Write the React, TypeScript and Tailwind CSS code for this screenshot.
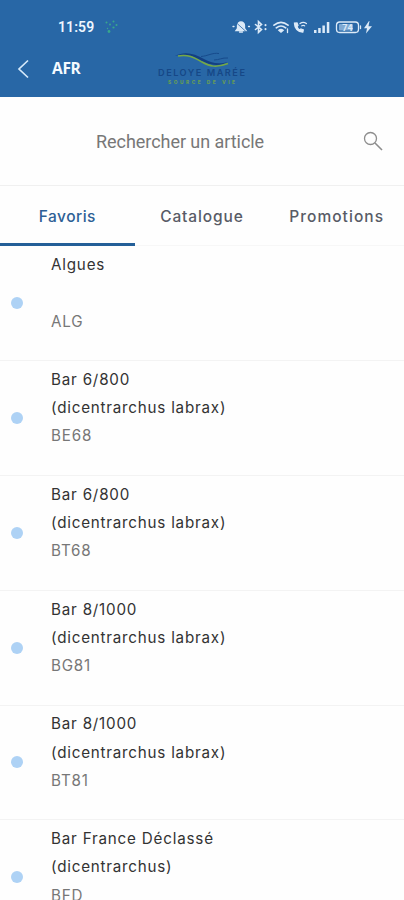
import { type FC } from "react";

interface Article {
  title: string;
  latin?: string;
  code: string;
}

const articles: Article[] = [
  { title: "Algues", code: "ALG" },
  { title: "Bar 6/800", latin: "(dicentrarchus labrax)", code: "BE68" },
  { title: "Bar 6/800", latin: "(dicentrarchus labrax)", code: "BT68" },
  { title: "Bar 8/1000", latin: "(dicentrarchus labrax)", code: "BG81" },
  { title: "Bar 8/1000", latin: "(dicentrarchus labrax)", code: "BT81" },
  { title: "Bar France Déclassé", latin: "(dicentrarchus)", code: "BFD" },
];

const StatusIcons = () => (
  <svg
    className="ml-[112px] h-4 w-[142px] text-[#dceaf8]"
    viewBox="0 0 142 16"
    fill="none"
    stroke="currentColor"
    strokeWidth="1.3"
    strokeLinecap="round"
  >
    {/* muted bell */}
    <path d="M4 11.500h10l-1.500-2V6.500a3.500 3.500 0 0 0-7 0v3z" fill="currentColor" />
    <path d="M7.500 13h3M1 7.500h1M16.500 7.500h1" />
    <path d="M3.500 3l11.500 10.500" stroke="#2867a6" strokeWidth=".8" />
    {/* bluetooth */}
    <path d="M23.500 5.500l6 5-3 2.800V2.700l3 2.800-6 5" strokeWidth="1.600" />
    <path d="M33.500 6v.2M33.500 10v.2" strokeWidth="2" />
    {/* wifi */}
    <path d="M42 6.200q7-5.500 14 0M44.300 8.800q4.700-3.600 9.400 0" strokeWidth="1.700" />
    <path d="M46.800 11.200q2.200-1.600 4.400 0L49 13.200z" fill="currentColor" />
    <path d="M55.500 10v3.500" />
    {/* wifi call */}
    <path d="M62.500 4.200c0 5 3.500 8.800 8.300 9l.5-2.200-2.400-1-1.200 1c-1.300-.8-2.200-2-2.700-3.300l1-1.200-1-2.500z" fill="currentColor" />
    <path d="M68 4.500q3.200-2.400 6.400 0M69.800 6.800q1.400-1 2.800 0" />
    {/* signal */}
    <g fill="currentColor" stroke="none">
      <rect x="82" y="11" width="2.500" height="3" />
      <rect x="86.200" y="9" width="2.500" height="5" />
      <rect x="90.400" y="6.500" width="2.500" height="7.500" />
      <rect x="94.800" y="3" width="2.500" height="11" />
    </g>
    {/* battery */}
    <rect x="104.500" y="3" width="22" height="10.500" rx="3.200" />
    <rect x="107" y="5" width="14" height="6.500" rx="1" fill="#7fa9d3" stroke="none" />
    <path d="M128.500 7v2.500" />
    <text
      x="115.500"
      y="11.500"
      textAnchor="middle"
      fontFamily="Roboto, sans-serif"
      fontSize="9"
      fontWeight="700"
      fill="currentColor"
      stroke="none"
    >
      74
    </text>
    <path d="M137 2l-5 7.200h3l-1 5.300 6-7.300h-3.500l1-5.200z" fill="currentColor" stroke="none" />
  </svg>
);

const StatusBar = () => (
  <div className="flex h-[53px] items-center pl-[58px]">
    <span className="w-[37px] font-['Roboto',sans-serif] text-[14px] leading-none font-semibold tracking-[0.1px] text-[#eef6ff]">
      11:59
    </span>
    <svg className="ml-[9px] h-4 w-4" viewBox="0 0 16 16" fill="#39a78c">
      <circle cx="2.500" cy="3.500" r="1" />
      <circle cx="6" cy="5.500" r="1" />
      <circle cx="9.500" cy="2.500" r="1" />
      <circle cx="12.500" cy="6" r="1" />
      <circle cx="9.500" cy="8.500" r="1.100" />
      <circle cx="5" cy="12.500" r="1.400" />
      <circle cx="3.500" cy="9.500" r=".7" />
    </svg>
    <StatusIcons />
  </div>
);

const Logo = () => (
  <svg className="ml-[74px] h-9 w-[90px]" viewBox="0 0 90 36" fill="none">
    <path d="M18 5C28-.5 38 3 46 7.500s15 6 25 3.500C62 16 52 14 44 9.500S29 2 18 5z" fill="#133f82" />
    <path d="M21 5c10-2 16 1.500 24 6s14 6 26 1.500" stroke="#75a846" strokeWidth="1.500" />
    <path d="M44 5.500c7-.5 11-4 18-3M57 9c5 0 8-2.500 14-2" stroke="#174b8c" />
    <text
      x="1"
      y="24.500"
      textLength="87"
      fontFamily="Inter, sans-serif"
      fontSize="9.200"
      fontWeight="600"
      fill="#164887"
    >
      DELOYE MARÉE
    </text>
    <text
      x="11"
      y="32.500"
      textLength="67"
      fontFamily="Inter, sans-serif"
      fontSize="4.800"
      fontWeight="800"
      fill="#659b58"
    >
      SOURCE DE VIE
    </text>
  </svg>
);

const Header = () => (
  <header className="h-[97px] shrink-0 bg-[#2867a6]">
    <StatusBar />
    <div className="flex h-8 items-center pl-[17px]">
      <svg className="h-5 w-3" viewBox="0 0 12 20" fill="none" stroke="#d5e9fa" strokeWidth="1.700">
        <path d="M11 1.500L2 10l9 8.500" />
      </svg>
      <span className="ml-[23px] w-[31px] font-['Open_Sans',sans-serif] text-[15.500px] leading-none font-bold tracking-[-0.3px] text-[#f5faff]">
        AFR
      </span>
      <Logo />
    </div>
  </header>
);

const SearchBar = () => (
  <div className="flex h-[89px] shrink-0 items-center border-b border-[#f0f0f0] pl-24">
    <span className="w-[267px] font-['Roboto',sans-serif] text-[18px] tracking-[-0.05px] text-[#777]">
      Rechercher un article
    </span>
    <svg className="h-5 w-5" viewBox="0 0 20 20" fill="none" stroke="#8d8d8d" strokeWidth="1.300">
      <circle cx="7.500" cy="7.500" r="6" />
      <path d="M12 12l7 7" strokeWidth="1.600" />
    </svg>
  </div>
);

const Tabs = () => (
  <nav className="grid h-[60px] shrink-0 grid-cols-3 font-['Inter',sans-serif] text-[15.500px] font-medium">
    <div className="border-b-[3px] border-[#245f98] pt-[19px] text-center tracking-[0.5px] text-[#2d6095]">
      Favoris
    </div>
    <div className="border-b border-[#f7f7f7] pt-[19px] text-center tracking-[0.9px] text-[#585b66]">
      Catalogue
    </div>
    <div className="border-b border-[#f7f7f7] pt-[19px] text-center tracking-[1.050px] text-[#585b66]">
      Promotions
    </div>
  </nav>
);

const ArticleRow: FC<Article> = ({ title, latin, code }) => (
  <li className="flex h-[114.800px] shrink-0 items-center border-b border-[#f3f3f3] pl-[11px]">
    <span className="size-3 rounded-full bg-[#aed2f5]" />
    <div className="ml-7 h-[104px] font-['Inter',sans-serif] text-[15.200px] leading-[28.200px] text-[#333]">
      <p className="tracking-[0.8px]">{title}</p>
      <p className="h-[28.200px] tracking-[0.78px]">{latin}</p>
      <p className="tracking-[0.8px] text-[#777]">{code}</p>
    </div>
  </li>
);

export default function App() {
  return (
    <div className="flex h-[900px] w-[404px] flex-col overflow-hidden bg-[#fefefe]">
      <Header />
      <SearchBar />
      <Tabs />
      <ul className="flex flex-col pt-[0.400px]">
        {articles.map((article) => (
          <ArticleRow key={article.code} {...article} />
        ))}
      </ul>
    </div>
  );
}
